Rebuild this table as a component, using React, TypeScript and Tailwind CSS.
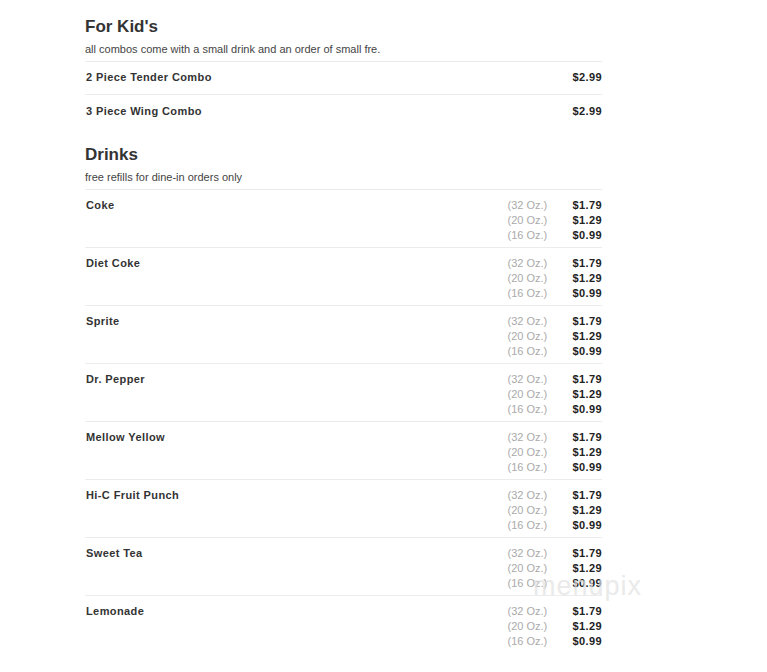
const kids = [
  { name: '2 Piece Tender Combo', price: '$2.99' },
  { name: '3 Piece Wing Combo', price: '$2.99' }
];

const drinkNames = [
  'Coke',
  'Diet Coke',
  'Sprite',
  'Dr. Pepper',
  'Mellow Yellow',
  'Hi-C Fruit Punch',
  'Sweet Tea',
  'Lemonade'
];

const sizes = [
  { size: '(32 Oz.)', price: '$1.79' },
  { size: '(20 Oz.)', price: '$1.29' },
  { size: '(16 Oz.)', price: '$0.99' }
];

export default function App() {
  return (
    <div className="relative min-h-[672px] bg-white pl-[85px] pt-[16px] font-['Liberation_Sans',Arial,sans-serif] text-[#333]">
      <div className="w-[517px]">
        {/* For Kid's */}
        <h2 className="text-[17px] leading-[22px] font-bold text-[#333]">For Kid's</h2>
        <p className="mt-[4px] text-[11px] leading-[15px] text-[#444]">
          all combos come with a small drink and an order of small fre.
        </p>
        <div className="mt-[4px]">
          {kids.map((item, i) => (
            <div
              key={item.name}
              className={`flex justify-between pb-[9px] ${i === 0 ? 'border-t border-b border-[#ececec] pt-[8px]' : 'pt-[9px]'}`}
            >
              <span className="pl-px text-[11px] leading-[15px] font-bold tracking-[0.4px] text-[#333]">
                {item.name}
              </span>
              <span className="text-[11px] leading-[15px] font-bold tracking-[0.4px] text-[#222]">
                {item.price}
              </span>
            </div>
          ))}
        </div>

        {/* Drinks */}
        <h2 className="mt-[16px] text-[17px] leading-[22px] font-bold text-[#333]">Drinks</h2>
        <p className="mt-[4px] text-[11px] leading-[15px] text-[#444]">free refills for dine-in orders only</p>
        <div className="mt-[4px]">
          {drinkNames.map((name) => (
            <div key={name} className="flex justify-between border-t border-[#ececec] pt-[8px] pb-[4px]">
              <span className="pl-px text-[11px] leading-[15px] font-bold tracking-[0.4px] text-[#333]">
                {name}
              </span>
              <div className="flex flex-col">
                {sizes.map((s) => (
                  <div key={s.size} className="flex text-[11px] leading-[15px]">
                    <span className="w-[65px] text-[#aaa]">{s.size}</span>
                    <span className="font-bold tracking-[0.4px] text-[#222]">{s.price}</span>
                  </div>
                ))}
              </div>
            </div>
          ))}
        </div>
      </div>

      {/* watermark */}
      <span className="pointer-events-none absolute left-[533px] top-[571px] text-[27px] leading-[30px] font-light tracking-[1px] text-[#e2e2e2] opacity-70 select-none">
        menupix
      </span>
    </div>
  );
}
